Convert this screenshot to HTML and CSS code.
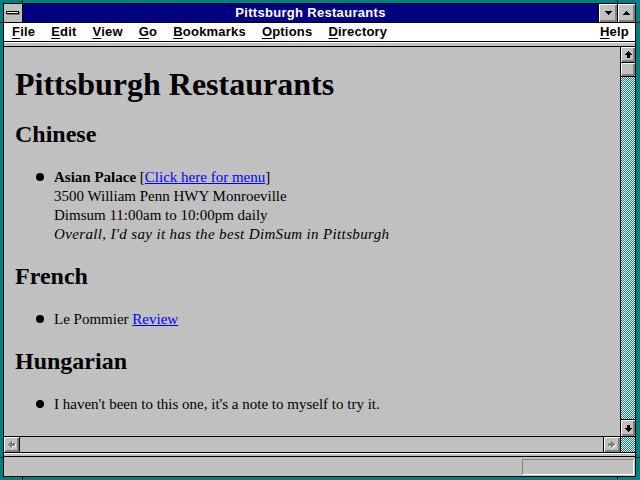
FILE: index.html
```
<!DOCTYPE html>
<html>
<head>
<meta charset="utf-8">
<title>Pittsburgh Restaurants</title>
<link rel="stylesheet" href="styles.css">
</head>
<body>
<div class="window">
  <span class="notch nv n1"></span>
  <span class="notch nv n2"></span>
  <span class="notch nv n3"></span>
  <span class="notch nv n4"></span>
  <span class="notch nh n5"></span>
  <span class="notch nh n6"></span>
  <span class="notch nh n7"></span>
  <span class="notch nh n8"></span>
  <div class="frame">
    <div class="titlebar">
      <div class="sysbox"><div class="sysbar"></div></div>
      <div class="caption">Pittsburgh Restaurants</div>
      <div class="tbtn">
        <svg width="7" height="4" viewBox="0 0 7 4" shape-rendering="crispEdges"><rect x="0" y="0" width="7" height="1"/><rect x="1" y="1" width="5" height="1"/><rect x="2" y="2" width="3" height="1"/><rect x="3" y="3" width="1" height="1"/></svg>
      </div>
      <div class="tbtn max">
        <svg width="7" height="4" viewBox="0 0 7 4" shape-rendering="crispEdges"><rect x="3" y="0" width="1" height="1"/><rect x="2" y="1" width="3" height="1"/><rect x="1" y="2" width="5" height="1"/><rect x="0" y="3" width="7" height="1"/></svg>
      </div>
    </div>
    <div class="menubar">
      <span class="mi"><u>F</u>ile</span>
      <span class="mi"><u>E</u>dit</span>
      <span class="mi"><u>V</u>iew</span>
      <span class="mi"><u>G</u>o</span>
      <span class="mi"><u>B</u>ookmarks</span>
      <span class="mi"><u>O</u>ptions</span>
      <span class="mi"><u>D</u>irectory</span>
      <span class="mi help"><u>H</u>elp</span>
    </div>
    <div class="toolstrip"></div>
    <div class="main">
      <div class="doc">
        <h1>Pittsburgh Restaurants</h1>
        <h2>Chinese</h2>
        <ul>
          <li><b>Asian Palace</b> [<a href="#">Click here for menu</a>]<br>3500 William Penn HWY Monroeville<br>Dimsum 11:00am to 10:00pm daily<br><i>Overall, I'd say it has the best DimSum in Pittsburgh</i></li>
        </ul>
        <h2>French</h2>
        <ul>
          <li>Le Pommier <a href="#">Review</a></li>
        </ul>
        <h2>Hungarian</h2>
        <ul>
          <li>I haven't been to this one, it's a note to myself to try it.</li>
        </ul>
      </div>
      <div class="vscroll">
        <div class="btn sup">
          <svg width="7" height="7" viewBox="0 0 7 7" shape-rendering="crispEdges"><rect x="3" y="0" width="1" height="1"/><rect x="2" y="1" width="3" height="1"/><rect x="1" y="2" width="5" height="1"/><rect x="0" y="3" width="7" height="1"/><rect x="2" y="4" width="3" height="3"/></svg>
        </div>
        <div class="btn thumb"></div>
        <div class="track"></div>
        <div class="btn sdown">
          <svg width="7" height="7" viewBox="0 0 7 7" shape-rendering="crispEdges"><rect x="2" y="0" width="3" height="3"/><rect x="0" y="3" width="7" height="1"/><rect x="1" y="4" width="5" height="1"/><rect x="2" y="5" width="3" height="1"/><rect x="3" y="6" width="1" height="1"/></svg>
        </div>
      </div>
    </div>
    <div class="hscroll">
      <div class="btn hleft">
        <svg width="8" height="8" viewBox="0 0 8 8" shape-rendering="crispEdges">
          <g fill="#ffffff"><rect x="1" y="4" width="1" height="1"/><rect x="2" y="3" width="1" height="3"/><rect x="3" y="2" width="1" height="5"/><rect x="4" y="1" width="1" height="7"/><rect x="5" y="3" width="3" height="3"/></g>
          <g fill="#808080"><rect x="0" y="3" width="1" height="1"/><rect x="1" y="2" width="1" height="3"/><rect x="2" y="1" width="1" height="5"/><rect x="3" y="0" width="1" height="7"/><rect x="4" y="2" width="3" height="3"/></g>
        </svg>
      </div>
      <div class="htrack"></div>
      <div class="btn hright">
        <svg width="8" height="8" viewBox="0 0 8 8" shape-rendering="crispEdges">
          <g fill="#ffffff"><rect x="1" y="3" width="3" height="3"/><rect x="4" y="1" width="1" height="7"/><rect x="5" y="2" width="1" height="5"/><rect x="6" y="3" width="1" height="3"/><rect x="7" y="4" width="1" height="1"/></g>
          <g fill="#808080"><rect x="0" y="2" width="3" height="3"/><rect x="3" y="0" width="1" height="7"/><rect x="4" y="1" width="1" height="5"/><rect x="5" y="2" width="1" height="3"/><rect x="6" y="3" width="1" height="1"/></g>
        </svg>
      </div>
      <div class="corner"></div>
    </div>
    <div class="sep"></div>
    <div class="status"><div class="statbox"></div></div>
  </div>
</div>
</body>
</html>
```

FILE: styles.css
```
* { box-sizing: content-box; }

body {
  margin: 0;
  background: #008080;
}

.window {
  position: relative;
  width: 633px;
  height: 474px;
  padding: 3px 4px 3px 3px;
  background: #008080;
}

.notch {
  position: absolute;
  background: #000;
}
.nv { width: 1px; height: 3px; }
.nh { height: 1px; }
.n1 { left: 22px; top: 0; }
.n2 { left: 617px; top: 0; }
.n3 { left: 22px; top: 477px; }
.n4 { left: 617px; top: 477px; }
.n5 { left: 0; top: 22px; width: 3px; }
.n6 { left: 0; top: 457px; width: 3px; }
.n7 { left: 636px; top: 22px; width: 4px; }
.n8 { left: 636px; top: 457px; width: 4px; }

.frame {
  display: flex;
  flex-direction: column;
  height: 472px;
  border: 1px solid #000;
  background: #c0c0c0;
}

.btn {
  background: #c0c0c0;
  box-shadow: inset 1px 1px 0 #ffffff, inset -1px -1px 0 #808080, inset -2px -2px 0 #808080;
  display: flex;
  align-items: center;
  justify-content: center;
}

/* title bar */
.titlebar {
  flex: none;
  display: flex;
  height: 18px;
  border-bottom: 1px solid #000;
}
.sysbox {
  width: 16px;
  height: 11px;
  padding: 7px 0 0 2px;
  border-right: 1px solid #000;
  background: #c0c0c0;
}
.sysbar {
  width: 11px;
  height: 1px;
  border: 1px solid #000;
  background: #fff;
  box-shadow: 1px 1px 0 #808080;
}
.caption {
  flex: 1;
  background: #000080;
  color: #fff;
  font: bold 13px "Liberation Sans", Arial, sans-serif;
  letter-spacing: 0.3px;
  line-height: 18px;
  text-align: center;
}
.tbtn {
  width: 18px;
  border-left: 1px solid #000;
  background: #c0c0c0;
  box-shadow: inset 1px 1px 0 #ffffff, inset -1px -1px 0 #808080, inset -2px -2px 0 #808080;
  display: flex;
  align-items: center;
  justify-content: center;
}
.tbtn.max { width: 17px; }
.tbtn svg { fill: #000; margin-top: -1px; }

/* menu */
.menubar {
  flex: none;
  display: flex;
  height: 18px;
  background: #fff;
  border-bottom: 1px solid #000;
  font: bold 13px "Liberation Sans", Arial, sans-serif;
  letter-spacing: 0.2px;
  line-height: 18px;
  color: #000;
}
.mi { padding: 0 8px; }
.mi.help { margin-left: auto; padding-right: 6px; }
.mi u {
  text-decoration-thickness: 1px;
  text-underline-offset: 2px;
}

.toolstrip {
  flex: none;
  height: 3px;
  border-top: 1px solid #fff;
  border-bottom: 1px solid #000;
  background: #c0c0c0;
}

/* main */
.main {
  flex: 1;
  min-height: 0;
  display: flex;
  border-bottom: 1px solid #000;
}
.doc {
  flex: 1;
  overflow: hidden;
  padding: 19px 11px 0 11px;
  background: #c0c0c0;
  color: #000;
  font-family: "Liberation Serif", "Times New Roman", serif;
}
.doc h1 {
  margin: 0 0 18px;
  font-size: 32px;
  line-height: 36px;
  font-weight: bold;
}
.doc h2 {
  margin: 18px 0 20px;
  font-size: 24px;
  line-height: 28px;
  font-weight: bold;
}
.doc ul {
  margin: 20px 0 18px;
  padding-left: 39px;
  list-style: none;
  font-size: 15px;
  line-height: 19px;
}
.doc li { position: relative; }
.doc li::before {
  content: "";
  position: absolute;
  left: -18px;
  top: 5px;
  width: 8px;
  height: 8px;
  border-radius: 50%;
  background: #000;
}
.doc i { letter-spacing: 0.35px; }
.doc a { color: #0000ff; text-decoration: underline; }

.vscroll {
  flex: none;
  width: 14px;
  border-left: 1px solid #000;
  display: flex;
  flex-direction: column;
}
.sup { height: 15px; border-bottom: 1px solid #000; }
.thumb { height: 13px; border-bottom: 1px solid #000; }
.track {
  flex: 1;
  background-image: repeating-conic-gradient(#008080 0 25%, #ffffff 0 50%);
  background-size: 2px 2px;
}
.sdown { height: 16px; border-top: 1px solid #000; }
.vscroll svg { fill: #000; }

.hscroll {
  flex: none;
  display: flex;
  height: 15px;
  border-bottom: 1px solid #000;
}
.hleft { width: 15px; border-right: 1px solid #000; }
.htrack { flex: 1; background: #c0c0c0; }
.hright { width: 16px; border-left: 1px solid #000; border-right: 1px solid #000; }
.corner {
  width: 14px;
  background-image: repeating-conic-gradient(#008080 0 25%, #ffffff 0 50%);
  background-size: 2px 2px;
}

.sep {
  flex: none;
  height: 2px;
  border-top: 1px solid #fff;
  border-bottom: 1px solid #000;
  background: #c0c0c0;
}

.status {
  flex: none;
  height: 16px;
  padding: 2px 1px 1px 0;
  display: flex;
  justify-content: flex-end;
  background: #c0c0c0;
}
.statbox {
  width: 110px;
  height: 14px;
  border: 1px solid;
  border-color: #808080 #ffffff #ffffff #808080;
}
```
